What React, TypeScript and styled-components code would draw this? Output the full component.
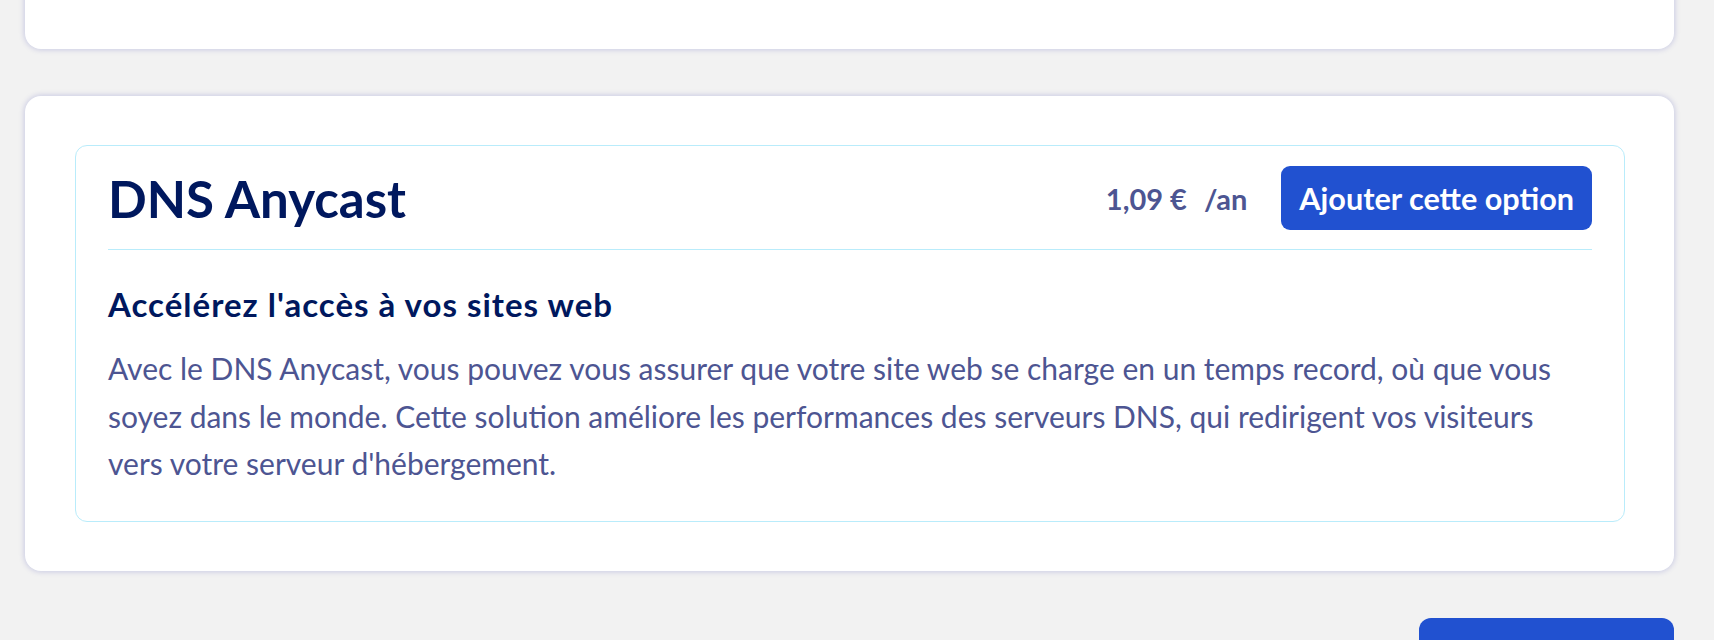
import React from "react";
import styled, { createGlobalStyle } from "styled-components";

const GlobalStyle = createGlobalStyle`
  html, body {
    margin: 0;
    padding: 0;
    background: #f2f2f2;
  }
  body {
    font-family: Lato, "Noto Sans", sans-serif;
    -webkit-font-smoothing: antialiased;
  }
  * { box-sizing: border-box; }
`;

const Page = styled.div`
  display: flex;
  flex-direction: column;
  gap: 47px;
  padding: 0 40px 0 25px;
  margin-top: -60px;
`;

const Card = styled.section`
  background: #ffffff;
  border-radius: 16px;
  box-shadow: 0 0 6px 0 rgba(0, 14, 156, 0.22);
`;

const TopCard = styled(Card)`
  height: 109px;
`;

const OptionCard = styled(Card)`
  padding: 49px 49px 49px 50px;
`;

const OptionBox = styled.div`
  border: 1px solid #b9ecfb;
  border-radius: 12px;
  padding: 0 32px 33px;
`;

const Header = styled.div`
  display: flex;
  align-items: center;
  justify-content: space-between;
  padding: 20px 0 19px;
  border-bottom: 1px solid #b9ecfb;
`;

const Title = styled.h2`
  margin: 0;
  font-size: 51px;
  line-height: 1;
  font-weight: 700;
  color: #00185e;
`;

const Actions = styled.div`
  display: flex;
  align-items: center;
  gap: 34px;
`;

const Price = styled.div`
  display: flex;
  align-items: baseline;
  gap: 17px;
  font-size: 29px;
  font-weight: 700;
  color: #4d5592;
`;

const PrimaryButton = styled.button`
  height: 64px;
  padding: 0 18px;
  border: none;
  border-radius: 9px;
  background: #2151d0;
  color: #ffffff;
  font-family: inherit;
  font-size: 30.6px;
  font-weight: 700;
  cursor: pointer;
`;

const Subtitle = styled.h3`
  margin: 36px 0 0;
  font-size: 33px;
  line-height: 36px;
  letter-spacing: 1px;
  font-weight: 700;
  color: #00185e;
`;

const Description = styled.p`
  margin: 23px 0 0;
  font-size: 30px;
  line-height: 47.5px;
  font-weight: 400;
  color: #4d5592;
`;

const Footer = styled.div`
  display: flex;
  justify-content: flex-end;
`;

const NextButton = styled.button`
  width: 255px;
  height: 64px;
  border: none;
  border-radius: 12px;
  background: #2151d0;
`;

export default function App() {
  return (
    <>
      <GlobalStyle />
      <Page>
        <TopCard />
        <OptionCard>
          <OptionBox>
            <Header>
              <Title>DNS Anycast</Title>
              <Actions>
                <Price>
                  <span>1,09 €</span>
                  <span>/an</span>
                </Price>
                <PrimaryButton>Ajouter cette option</PrimaryButton>
              </Actions>
            </Header>
            <Subtitle>Accélérez l'accès à vos sites web</Subtitle>
            <Description>
              Avec le DNS Anycast, vous pouvez vous assurer que votre site web se charge en un temps record, où que vous
              soyez dans le monde. Cette solution améliore les performances des serveurs DNS, qui redirigent vos visiteurs
              vers votre serveur d'hébergement.
            </Description>
          </OptionBox>
        </OptionCard>
        <Footer>
          <NextButton aria-label="Continuer" />
        </Footer>
      </Page>
    </>
  );
}
